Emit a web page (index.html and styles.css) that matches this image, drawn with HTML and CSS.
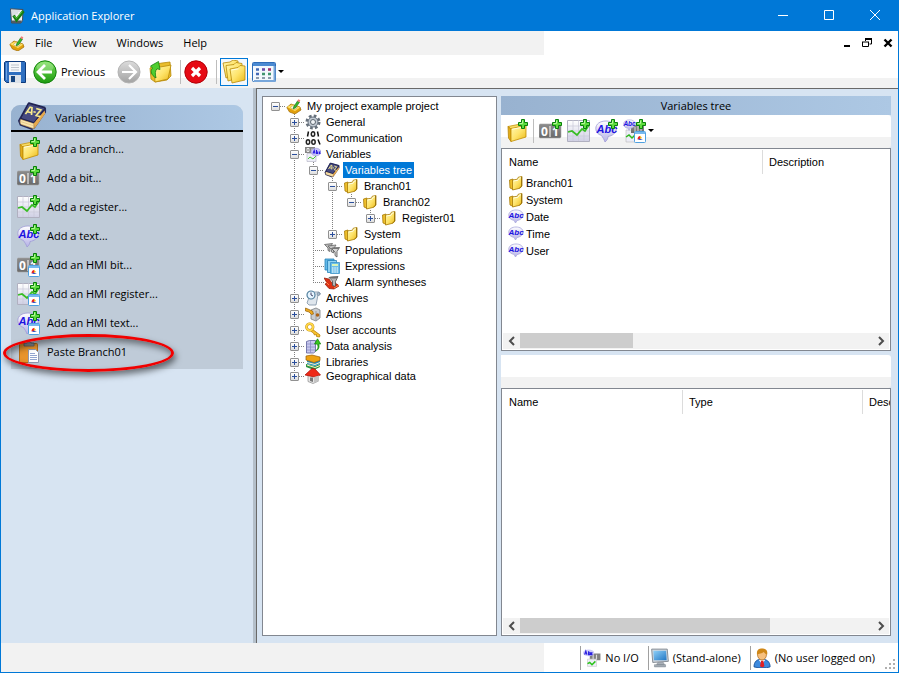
FILE: index.html
```html
<!DOCTYPE html>
<html lang="en">
<head>
<meta charset="utf-8">
<title>Application Explorer</title>
<link rel="stylesheet" href="styles.css">
</head>
<body>
<svg class="sprite" aria-hidden="true">
  <defs>
    <linearGradient id="gold" x1="0" y1="0" x2="1" y2="1"><stop offset="0" stop-color="#fff8b4"/><stop offset=".5" stop-color="#fee46c"/><stop offset="1" stop-color="#eab714"/></linearGradient>
    <linearGradient id="grass" x1="0" y1="0" x2="0" y2="1"><stop offset="0" stop-color="#7be05a"/><stop offset="1" stop-color="#1c9a10"/></linearGradient>
    <linearGradient id="steel" x1="0" y1="0" x2="0" y2="1"><stop offset="0" stop-color="#8c8c8c"/><stop offset="1" stop-color="#6a6a6a"/></linearGradient>
    <linearGradient id="bubble" x1="0" y1="0" x2="0" y2="1"><stop offset="0" stop-color="#fff"/><stop offset="1" stop-color="#b4b0e6"/></linearGradient>
    <linearGradient id="paper" x1="0" y1="0" x2="0" y2="1"><stop offset="0" stop-color="#fff"/><stop offset="1" stop-color="#cfcfe4"/></linearGradient>
    <linearGradient id="silver" x1="0" y1="0" x2="0" y2="1"><stop offset="0" stop-color="#dcdcdc"/><stop offset="1" stop-color="#a2a2a2"/></linearGradient>
    <linearGradient id="sky" x1="0" y1="0" x2="1" y2="1"><stop offset="0" stop-color="#8fd0f8"/><stop offset="1" stop-color="#2277c4"/></linearGradient>
  </defs>
  <symbol id="plus" viewBox="0 0 10 10"><path d="M3.500.5h3v3h3v3h-3v3h-3v-3h-3v-3h3z" fill="#5fdc3e" stroke="#08800a"/><path d="M4.500 1.500v3h-3" fill="none" stroke="#b5f79b"/></symbol>
  <symbol id="folder" viewBox="0 0 20 20"><path d="M1 4.500L11 2.500l8 1-14 5z" fill="#f8dd66" stroke="#c8950c" stroke-width=".8"/><path d="M1 4.500L4 7v12.500L1.500 16z" fill="#e2ac1a" stroke="#b98505" stroke-width=".8"/><path d="M4 6.500l15-3V15L4 19.500z" fill="url(#gold)" stroke="#c08c00" stroke-width=".8"/><path d="M5 7.300l13-2.600" stroke="#fffde0"/></symbol>
  <symbol id="folder-s" viewBox="0 0 16 16"><path d="M1.500 5L5 4l.500 10.500-3.500-1.500z" fill="#eebf2a" stroke="#a87b08" stroke-width=".8"/><path d="M4.500 5l5-.800.800-2L14 1.500V11l-2 2.200-7.500 1.800z" fill="url(#gold)" stroke="#a87b08" stroke-width=".8"/><path d="M13.500 2v9l-1.800 2" stroke="#8f6800" stroke-width=".8" fill="none"/><path d="M5.500 6l4.500-.800 1-2 2-.500" stroke="#fffde0" fill="none"/></symbol>
  <symbol id="bit" viewBox="0 0 24 24"><rect x="0" y="5" width="22" height="14" rx="1.500" fill="url(#steel)" stroke="#a5a5a5" stroke-width=".6"/><text x="2" y="16.500" class="glyph-bit">0</text><path d="M11 7v11" stroke="#fff"/><text x="13" y="16.500" class="glyph-bit">1</text></symbol>
  <symbol id="chart" viewBox="0 0 24 24"><path d="M.5 1.500h22v21H.5z" fill="url(#paper)" stroke="#b0b0c0"/><path d="M6 1v21M11.500 1v21M17 1v21M1 7h21M1 12h21M1 17h21" stroke="#c9c9d8" stroke-width=".7"/><path d="M1 13l4-1 5 4 5-6 3 2 4-6" fill="none" stroke="#38bd24" stroke-width="1.700"/></symbol>
  <symbol id="text" viewBox="0 0 24 24"><path d="M11 2c6 0 10.500 3 10.500 7.500S17 17 13 17.500c0 2-1 4-3 5.500-1-3-2-4-3.500-6.500C3 15.500.8 13 .8 9.500.8 5 5 2 11 2z" fill="url(#bubble)" stroke="#9e9ad6" stroke-width=".8"/><text x="1.500" y="13.500" class="glyph-abc">Abc</text></symbol>
  <symbol id="text-s" viewBox="0 0 16 16"><path d="M8 1c4 0 7 1.800 7 5S12 11 9 11.500L7.500 14 6 11.300C3 11 .8 9.300.8 6 .8 3 4 1 8 1z" fill="url(#bubble)" stroke="#aaa8dd" stroke-width=".8"/><text x=".5" y="9" class="glyph-abc-s">Abc</text></symbol>
  <symbol id="hmi" viewBox="0 0 12 12"><rect x=".5" y=".5" width="11" height="11" rx="1" fill="#fff" stroke="#4ea0e0"/><path d="M1 1h10v2H1z" fill="#78b9ee"/><path d="M3.500 8.500c0-2 1-3.500 2.500-3.500v3z" fill="#e22"/><path d="M6 4.500l2 2.500-2 1z" fill="#f6b21c"/><path d="M5.500 7.500L9 9H4z" fill="#3b55c8"/></symbol>
  <symbol id="add-branch" viewBox="0 0 24 24"><use href="#folder" x="2" y="3" width="20" height="20"/><use href="#plus" x="13" y="0" width="10" height="10"/></symbol>
  <symbol id="add-bit" viewBox="0 0 24 24"><use href="#bit" width="24" height="24"/><use href="#plus" x="13" y="0" width="10" height="10"/></symbol>
  <symbol id="add-register" viewBox="0 0 24 24"><use href="#chart" width="24" height="24"/><use href="#plus" x="13" y="0" width="10" height="10"/></symbol>
  <symbol id="add-text" viewBox="0 0 24 24"><use href="#text" width="24" height="24"/><use href="#plus" x="13" y="0" width="10" height="10"/></symbol>
  <symbol id="add-hmi-bit" viewBox="0 0 24 24"><use href="#add-bit" width="24" height="24"/><use href="#hmi" x="11" y="12" width="12" height="12"/></symbol>
  <symbol id="add-hmi-register" viewBox="0 0 24 24"><use href="#add-register" width="24" height="24"/><use href="#hmi" x="11" y="12" width="12" height="12"/></symbol>
  <symbol id="add-hmi-text" viewBox="0 0 24 24"><use href="#add-text" width="24" height="24"/><use href="#hmi" x="11" y="12" width="12" height="12"/></symbol>
  <symbol id="mix" viewBox="0 0 24 24"><path d="M3 11h12v12H3z" fill="#ececf6" stroke="#bbb" stroke-width=".6"/><path d="M3 18l3-2 3 3 4-4" stroke="#2eb81c" stroke-width="1.500" fill="none"/><rect x="8" y="6" width="13" height="8" fill="url(#steel)"/><path d="M12 8v5M15 7v6M18 8v5" stroke="#ddd"/><use href="#text-s" x="0" y="0" width="13" height="13"/><use href="#plus" x="13" y="0" width="10" height="10"/><use href="#hmi" x="11" y="12" width="12" height="12"/></symbol>
  <symbol id="paste" viewBox="0 0 24 24"><rect x="2.500" y="3.500" width="18" height="19" rx="1" fill="#e8942c" stroke="#b96c12"/><path d="M7 6V3h3c0-2 4-2 4 0h3v3z" fill="#8d9299" stroke="#5c6066" stroke-width=".8"/><path d="M11.500 9.500h7l3 3v10h-10z" fill="#fff" stroke="#8f98b0"/><path d="M13 13.500h5M13 15.500h7M13 17.500h7M13 19.500h7" stroke="#93a5cf"/></symbol>
  <symbol id="book" viewBox="0 0 32 32"><path d="M1 21L11 3c.5-1.500 1.500-2 3-1.500L30 6l1 2v4L19 29l-3 2L3 26z" fill="#262a5c"/><path d="M4 19.500l14 4.500v5.500L4.500 25C3 24 3 21 4 19.500z" fill="#fbe6b0" stroke="#b5893c" stroke-width=".6"/><path d="M4 22l14 4.500" stroke="#d9b671" stroke-width=".6"/><path d="M18 23.500L29.500 10l.5 3.500L18.500 29.500z" fill="#e6a94c"/><path d="M4 18.500L12.500 2.500 30 7.500 18 23z" fill="#464a80" stroke="#1c1f4b"/><path d="M9 14l5-7.500 2 .5-.5 8M11 11.500l4.500 1M17.500 11.500l2.500.5M20.500 8l5 1.500-5 6 4.500 1.200" fill="none" stroke="#f8eb8c" stroke-width="1.800"/></symbol>
  <symbol id="app" viewBox="0 0 16 16"><path d="M1.500.8l12.500.7-.5 11L12 15H2.500z" fill="#eef1f4" stroke="#454d57"/><path d="M2.500 12.500h10.500l-1 2.500H3z" fill="#525a62"/><path d="M3 3h8M3 5h6M3 7h4" stroke="#c7cdd4"/><path d="M4.500 7.500l3 4.500 7-9" fill="none" stroke="#167d14" stroke-width="3"/><path d="M5.500 8l2 2.500 5.500-7" fill="none" stroke="#59c63a"/></symbol>
  <symbol id="project" viewBox="0 0 16 16"><path d="M.8 9.500L5 6l9 3 1 3-6 4-5.500-2z" fill="#e2a00c" stroke="#9d6a05" stroke-width=".7"/><path d="M1 9l5-2.500 8 3-5 3.500z" fill="#ffe468"/><ellipse cx="8" cy="9.500" rx="3.200" ry="1.900" fill="#fff" stroke="#c69218" stroke-width=".6"/><path d="M7.500 9l4-6 2 1.200-4 5.800-2.500.8z" fill="#35b52a" stroke="#176f13" stroke-width=".6"/><path d="M11.300 3l1-1.800 2 1-.8 2z" fill="#f27b78"/></symbol>
  <symbol id="save" viewBox="0 0 24 24"><path d="M2.500 1.500h19l1 1v20h-19l-2-2v-18z" fill="#2f6fc0" stroke="#0d3a7c"/><path d="M6 2h12v10H6z" fill="#f5f7fa"/><path d="M8 5h8M8 7.500h8M8 10h8" stroke="#bcc3cc"/><path d="M6 15h12v8H6z" fill="#dce2ea"/><path d="M8 16h4v6H8z" fill="#17457f"/><path d="M3.500 3v17" stroke="#6da4e4"/></symbol>
  <symbol id="back" viewBox="0 0 24 24"><circle cx="12" cy="12" r="11.200" fill="url(#grass)" stroke="#12820d"/><ellipse cx="12" cy="7" rx="8.500" ry="5" fill="#fff" opacity=".22"/><path d="M12 5l-7 7 7 7M5.500 12H19" fill="none" stroke="#fff" stroke-width="2.800"/></symbol>
  <symbol id="forward" viewBox="0 0 24 24"><circle cx="12" cy="12" r="11" fill="url(#silver)" stroke="#b4b4b4"/><path d="M12 5l7 7-7 7M18.500 12H5" fill="none" stroke="#fff" stroke-width="2.200"/></symbol>
  <symbol id="folder-up" viewBox="0 0 24 24"><path d="M2 8l6-4 6-1 8-1 1 14-4 4-12 2-4-3z" fill="#e9bd2c" stroke="#b88908" stroke-width=".8"/><path d="M6 8l12-2 5-1-3 14L7 22z" fill="url(#gold)" stroke="#b88908" stroke-width=".8"/><path d="M8 18c-5-3-6-7-3.500-10L2.500 6l8-4.500 1.500 8L9 8.800c-2 2-2 5-1 9.200z" fill="#4fce2f" stroke="#14810e" stroke-width=".8"/></symbol>
  <symbol id="stop" viewBox="0 0 24 24"><circle cx="12" cy="12" r="11.200" fill="#e60a14" stroke="#b00008"/><path d="M8 8l8 8M16 8l-8 8" stroke="#fff" stroke-width="3.200"/></symbol>
  <symbol id="folders" viewBox="0 0 24 24"><path d="M1 3l7-1 3-2 5 1v13L4 18z" fill="url(#gold)" stroke="#b88908" stroke-width=".8"/><path d="M4 5.500l8-1L14 2.500l6 1V17L6 21z" fill="url(#gold)" stroke="#b88908" stroke-width=".8"/><path d="M8 9l8-1.500 2-2 5 .5v14L10 23z" fill="url(#gold)" stroke="#b88908" stroke-width=".8"/><path d="M9.500 10l7-1.200" stroke="#fffde0"/></symbol>
  <symbol id="views" viewBox="0 0 24 24"><rect x=".5" y="2.500" width="23" height="19" rx="1" fill="#f3f8fd" stroke="#2e6cb8"/><path d="M1 3h22v3H1z" fill="#4b8ad2"/><path d="M22.500 6v15H2" fill="none" stroke="#77a6da" stroke-width="2"/><path d="M4 9.500h3M4 14h3" stroke="#4368b5" stroke-width="2.600"/><path d="M10 9.500h3" stroke="#6a4ba8" stroke-width="2.600"/><path d="M16 9.500h3" stroke="#a02f6c" stroke-width="2.600"/><path d="M10 14h3M16 14h3" stroke="#3f9470" stroke-width="2.600"/><path d="M4 18h3M10 18h3M16 18h3" stroke="#6a7b91" stroke-width="1.600"/></symbol>
  <symbol id="gear" viewBox="0 0 16 16"><circle cx="8" cy="8" r="6" fill="none" stroke="#66707b" stroke-width="3" stroke-dasharray="2.600 2.110"/><circle cx="8" cy="8" r="5" fill="#c2cad3" stroke="#67727f"/><circle cx="8" cy="8" r="2.500" fill="#f1f4f7" stroke="#5c6670"/></symbol>
  <symbol id="binary" viewBox="0 0 16 16"><path d="M3.500 1.500l-1 5M12.500 1.500l1 5M13 9.500l2 5" stroke="#111" stroke-width="1.500"/><ellipse cx="8" cy="4" rx="1.700" ry="2.300" fill="none" stroke="#222" stroke-width="1.500"/><ellipse cx="3" cy="12" rx="1.700" ry="2.300" fill="none" stroke="#222" stroke-width="1.500"/><ellipse cx="8.500" cy="12" rx="1.700" ry="2.300" fill="none" stroke="#222" stroke-width="1.500"/></symbol>
  <symbol id="variables" viewBox="0 0 16 16"><path d="M0 1h10v6H0z" fill="#858585"/><path d="M2 2.500h2v3H2zM7 2.500v3" stroke="#fff" stroke-width=".8" fill="none"/><path d="M2 7.500h9v8H2z" fill="#eeeef8" stroke="#b9b9c8" stroke-width=".7"/><path d="M3 13l2-2 3 2 3-3" fill="none" stroke="#4ac832"/><ellipse cx="11" cy="6" rx="5" ry="3.800" fill="#c8c5f6" stroke="#9a96dc" stroke-width=".6"/><path d="M8 7.500l1.200-3L10 7.500M11.500 4v3.500h1.200V6h-1M15.500 6h-1v1.500h1" fill="none" stroke="#2a1fe0" stroke-width="1.100"/></symbol>
  <symbol id="variables-r" viewBox="0 0 16 16"><path d="M6 4h9.500v6H6z" fill="#818181"/><path d="M9 5v4M12 5v4" stroke="#ddd"/><path d="M4 9h8v6.500H4z" fill="#eeeef8" stroke="#ccc" stroke-width=".6"/><path d="M4 13l2-1 2 2 3-3" fill="none" stroke="#2cc41a" stroke-width="1.300"/><ellipse cx="5" cy="3.500" rx="5" ry="3" fill="#ceccf8"/><path d="M1.500 5l1-3 1 3M5 2v3h1.500V3.500H5M8.500 3.500h-1V5h1" fill="none" stroke="#2a1fe0" stroke-width="1.100"/></symbol>
  <symbol id="funnels" viewBox="0 0 16 16"><path d="M.5 2.500l8-1-2.500 4v4l-2-1V6z" fill="#b7b7b7" stroke="#666" stroke-width=".8"/><path d="M4 4l8-1-2.500 4v4l-2-1V7.500z" fill="#c4c4c4" stroke="#666" stroke-width=".8"/><path d="M7.500 6.500l8-1-2.500 4v5.500l-2-1.500V10z" fill="#d6d6d6" stroke="#555" stroke-width=".8"/><ellipse cx="11.500" cy="6.200" rx="3.600" ry=".9" fill="#777"/></symbol>
  <symbol id="calc" viewBox="0 0 16 16"><path d="M1 1h9v11H1z" fill="#63b9e8" stroke="#2480b8" stroke-width=".8"/><path d="M3.500 2.500h9v12h-9z" fill="#92d2f2" stroke="#2480b8" stroke-width=".8"/><path d="M6.500 4.500h9v11h-9z" fill="#6cbde8" stroke="#3a92c6" stroke-width=".8"/><path d="M8 6h6v2H8z" fill="#d9f4b8"/><path d="M8 10h6M8 12h6M8 14h6" stroke="#fff" stroke-dasharray="1.500 .8"/></symbol>
  <symbol id="alarm" viewBox="0 0 16 16"><path d="M0 4l5 1 3 4 5 1 2 2-5 3-5-.500L1 10l2-1z" fill="#dc3215" stroke="#8c1705" stroke-width=".7"/><path d="M5 3.500l9-1-2.500 5v5l-3-1V7z" fill="#b8b8b8" stroke="#4d4d4d" stroke-width=".8"/><ellipse cx="9.500" cy="3.500" rx="4" ry="1" fill="#6f6f6f"/><path d="M2 8l3 3M10 14l5-3" stroke="#ff8148"/></symbol>
  <symbol id="archive" viewBox="0 0 16 16"><path d="M6 2h8l1.500 2-2.500 1-2 10H4l-2-2z" fill="#dfe6ed" stroke="#7e90a3" stroke-width=".8"/><circle cx="6" cy="5" r="4" fill="#e7f5ff" stroke="#53809f" stroke-width="1.200"/><path d="M6 2.500V5l2 1" fill="none" stroke="#446"/><circle cx="13.500" cy="4" r="1.500" fill="#a7b8c9" stroke="#667d93" stroke-width=".6"/></symbol>
  <symbol id="action" viewBox="0 0 16 16"><path d="M6 4l5-2 4 2v8l-4 3-5-2z" fill="#c9ccd0" stroke="#7a7e82" stroke-width=".8"/><path d="M11 5v9" stroke="#9a9da1"/><circle cx="12.500" cy="9" r="1.800" fill="#ad6218"/><path d="M.5 2l7 3 1 3-2 .5L4 6 .5 5z" fill="#eda81f" stroke="#936008" stroke-width=".7"/></symbol>
  <symbol id="key" viewBox="0 0 16 16"><path d="M7 7l8 6-.500 2-3-.500v-2l-2 .500-1-2-3-2" fill="#f9c42c" stroke="#b47d06" stroke-width=".8"/><circle cx="4.800" cy="5" r="3.300" fill="none" stroke="#c08a10" stroke-width="2.600"/><circle cx="4.800" cy="5" r="3.300" fill="none" stroke="#ffd848" stroke-width="1.800"/></symbol>
  <symbol id="analysis" viewBox="0 0 16 16"><path d="M1.500 3.500l3-1h6v11l-2 1.500h-7z" fill="#c8c9ef" stroke="#5c5e9b" stroke-width=".8"/><path d="M2 6h8M2 9h8M2 12h8M5.500 3v12" stroke="#8c8dc4" stroke-width=".8"/><path d="M10.500 13c3-2 3-5 1.500-7H9.500L12.500.8l3.200 5.200h-2c1 3 0 6-3.200 7z" fill="#36c61e" stroke="#0e7f08" stroke-width=".7"/></symbol>
  <symbol id="library" viewBox="0 0 16 16"><path d="M1 10l9 2 5-2v3l-6 3-8-3z" fill="#2f9442"/><path d="M2 6l7 2 6-2v4l-5 2-8-2z" fill="#248ec0"/><path d="M1 2l6-1 8 2v3.500L9 8.500 1 6z" fill="#eea211" stroke="#985d04" stroke-width=".7"/><path d="M2 8.500l8 2 5-2M2 11l8 2.500 5-2" fill="none" stroke="#fff5c4"/></symbol>
  <symbol id="house" viewBox="0 0 16 16"><path d="M3 7h10.500v6L8 15.500 3 13.500z" fill="#e6e6e6" stroke="#8a8a8a" stroke-width=".7"/><path d="M0 7l7-6.500 3 .500L15.500 7l-6 2z" fill="#ee2a18" stroke="#a40e05" stroke-width=".7"/><path d="M5 9.500h3V14l-3-1z" fill="#777"/><path d="M9 9v6l5-2V7.500z" fill="#c4c4c4"/></symbol>
  <symbol id="monitor" viewBox="0 0 16 18"><path d="M.5 1h14l1 11-14 1z" fill="#d3d8de" stroke="#7b838c" stroke-width=".8"/><path d="M2 2.500h11.500l.5 8.500H2.500z" fill="url(#sky)"/><path d="M6 13h5l1 2H5zM3 15h10v2H3z" fill="#a9b0b8" stroke="#7f8790" stroke-width=".5"/></symbol>
  <symbol id="user" viewBox="0 0 16 18"><path d="M.8 17c0-5 3-7 7-7s7.500 2 7.500 7c-4 1.300-10 1.300-14.500 0z" fill="#3d8ade" stroke="#19519a" stroke-width=".8"/><path d="M5 10.500l3 4 3-4z" fill="#fff"/><path d="M7.200 11.500h2l1 5-2 1-2-1z" fill="#e22022"/><ellipse cx="8" cy="6" rx="4" ry="4.800" fill="#f7c07e" stroke="#b06e1e" stroke-width=".7"/><path d="M3.500 6C3 2 5 .5 8 .5s5.500 1.500 4.600 5.500C11 5 10 4 9.500 3.500 8 5 5 4.500 3.500 6z" fill="#cf8718"/></symbol>
</svg>

<div class="window">
  <header class="titlebar">
    <svg class="i16"><use href="#app"/></svg>
    <h1>Application Explorer</h1>
    <div class="caption-buttons">
      <button aria-label="Minimize"><svg class="i12" viewBox="0 0 12 12"><path d="M1 5.500h10" stroke="#fff"/></svg></button>
      <button aria-label="Maximize"><svg class="i12" viewBox="0 0 12 12"><path d="M1.500.5h9v9h-9z" fill="none" stroke="#fff"/></svg></button>
      <button aria-label="Close"><svg class="i12" viewBox="0 0 12 12"><path d="M1 0l10 10M11 0L1 10" stroke="#fff"/></svg></button>
    </div>
  </header>

  <nav class="menubar">
    <svg class="i16"><use href="#project"/></svg>
    <button>File</button><button>View</button><button>Windows</button><button>Help</button>
    <div class="mdi-buttons">
      <button aria-label="Minimize document"><svg class="i12" viewBox="0 0 12 12"><path d="M2 9h6" stroke="#000" stroke-width="2"/></svg></button>
      <button aria-label="Restore document"><svg class="i12" viewBox="0 0 12 12"><path d="M3 1.500h7M3 2.500h7M9.500 2v5H7.500M3.500 2v2M.5 5v4.500h6V5M0 5h7" fill="none" stroke="#000"/></svg></button>
      <button aria-label="Close document"><svg class="i12" viewBox="0 0 12 12"><path d="M2.500 2.500l7 7M9.500 2.500l-7 7" stroke="#000" stroke-width="2.400"/></svg></button>
    </div>
  </nav>

  <div class="toolbar">
    <button aria-label="Save"><svg class="i24"><use href="#save"/></svg></button>
    <button class="previous"><svg class="i24"><use href="#back"/></svg>Previous</button>
    <button aria-label="Next"><svg class="i24"><use href="#forward"/></svg></button>
    <button class="up" aria-label="Up one level"><svg class="i24"><use href="#folder-up"/></svg></button>
    <span class="separator"></span>
    <button aria-label="Delete"><svg class="i24"><use href="#stop"/></svg></button>
    <span class="separator"></span>
    <button class="checked" aria-label="Show tree" aria-pressed="true"><svg class="i24"><use href="#folders"/></svg></button>
    <button class="views" aria-label="Views"><svg class="i24"><use href="#views"/></svg><span class="caret"></span></button>
  </div>

  <main class="workspace">
    <aside class="tasks">
      <section class="task-panel">
        <h2><svg class="i32"><use href="#book"/></svg>Variables tree</h2>
        <ul>
          <li><button><svg class="i24"><use href="#add-branch"/></svg>Add a branch...</button></li>
          <li><button><svg class="i24"><use href="#add-bit"/></svg>Add a bit...</button></li>
          <li><button><svg class="i24"><use href="#add-register"/></svg>Add a register...</button></li>
          <li><button><svg class="i24"><use href="#add-text"/></svg>Add a text...</button></li>
          <li><button><svg class="i24"><use href="#add-hmi-bit"/></svg>Add an HMI bit...</button></li>
          <li><button><svg class="i24"><use href="#add-hmi-register"/></svg>Add an HMI register...</button></li>
          <li><button><svg class="i24"><use href="#add-hmi-text"/></svg>Add an HMI text...</button></li>
          <li class="marked"><button><svg class="i24"><use href="#paste"/></svg>Paste Branch01</button><span class="marker"></span></li>
        </ul>
      </section>
    </aside>

    <div class="explorer">
      <nav class="tree">
        <ul>
          <li><div class="node"><button class="toggle open" aria-label="Collapse"></button><svg class="i16"><use href="#project"/></svg><span>My project example project</span></div>
            <ul>
              <li><div class="node"><button class="toggle" aria-label="Expand"></button><svg class="i16"><use href="#gear"/></svg><span>General</span></div></li>
              <li><div class="node"><button class="toggle" aria-label="Expand"></button><svg class="i16"><use href="#binary"/></svg><span>Communication</span></div></li>
              <li><div class="node"><button class="toggle open" aria-label="Collapse"></button><svg class="i16"><use href="#variables"/></svg><span>Variables</span></div>
                <ul>
                  <li><div class="node"><button class="toggle open" aria-label="Collapse"></button><svg class="i16"><use href="#book"/></svg><span class="selected">Variables tree</span></div>
                    <ul>
                      <li><div class="node"><button class="toggle open" aria-label="Collapse"></button><svg class="i16"><use href="#folder-s"/></svg><span>Branch01</span></div>
                        <ul>
                          <li><div class="node"><button class="toggle open" aria-label="Collapse"></button><svg class="i16"><use href="#folder-s"/></svg><span>Branch02</span></div>
                            <ul>
                              <li><div class="node"><button class="toggle" aria-label="Expand"></button><svg class="i16"><use href="#folder-s"/></svg><span>Register01</span></div></li>
                            </ul>
                          </li>
                        </ul>
                      </li>
                      <li><div class="node"><button class="toggle" aria-label="Expand"></button><svg class="i16"><use href="#folder-s"/></svg><span>System</span></div></li>
                    </ul>
                  </li>
                  <li><div class="node leaf"><svg class="i16"><use href="#funnels"/></svg><span>Populations</span></div></li>
                  <li><div class="node leaf"><svg class="i16"><use href="#calc"/></svg><span>Expressions</span></div></li>
                  <li><div class="node leaf"><svg class="i16"><use href="#alarm"/></svg><span>Alarm syntheses</span></div></li>
                </ul>
              </li>
              <li><div class="node"><button class="toggle" aria-label="Expand"></button><svg class="i16"><use href="#archive"/></svg><span>Archives</span></div></li>
              <li><div class="node"><button class="toggle" aria-label="Expand"></button><svg class="i16"><use href="#action"/></svg><span>Actions</span></div></li>
              <li><div class="node"><button class="toggle" aria-label="Expand"></button><svg class="i16"><use href="#key"/></svg><span>User accounts</span></div></li>
              <li><div class="node"><button class="toggle" aria-label="Expand"></button><svg class="i16"><use href="#analysis"/></svg><span>Data analysis</span></div></li>
              <li><div class="node"><button class="toggle" aria-label="Expand"></button><svg class="i16"><use href="#library"/></svg><span>Libraries</span></div></li>
              <li><div class="node short"><button class="toggle" aria-label="Expand"></button><svg class="i16"><use href="#house"/></svg><span>Geographical data</span></div></li>
            </ul>
          </li>
        </ul>
      </nav>

      <div class="details">
        <h2>Variables tree</h2>
        <div class="panel-bar">
          <button aria-label="Add a branch"><svg class="i24"><use href="#add-branch"/></svg></button>
          <span class="separator"></span>
          <button aria-label="Add a bit"><svg class="i24"><use href="#add-bit"/></svg></button>
          <button aria-label="Add a register"><svg class="i24"><use href="#add-register"/></svg></button>
          <button aria-label="Add a text"><svg class="i24"><use href="#add-text"/></svg></button>
          <button class="more" aria-label="Add HMI variable"><svg class="i24"><use href="#mix"/></svg><span class="caret"></span></button>
        </div>
        <section class="list upper">
          <div class="list-body">
            <table>
              <colgroup><col class="wide"><col></colgroup>
              <thead><tr><th>Name</th><th>Description</th></tr></thead>
              <tbody>
                <tr><td><div class="cell"><svg class="i16"><use href="#folder-s"/></svg>Branch01</div></td><td></td></tr>
                <tr><td><div class="cell"><svg class="i16"><use href="#folder-s"/></svg>System</div></td><td></td></tr>
                <tr><td><div class="cell"><svg class="i16"><use href="#text-s"/></svg>Date</div></td><td></td></tr>
                <tr><td><div class="cell"><svg class="i16"><use href="#text-s"/></svg>Time</div></td><td></td></tr>
                <tr><td><div class="cell"><svg class="i16"><use href="#text-s"/></svg>User</div></td><td></td></tr>
              </tbody>
            </table>
          </div>
          <div class="scrollbar">
            <button aria-label="Scroll left"><svg viewBox="0 0 8 10"><path d="M6 1L2 5l4 4" /></svg></button>
            <div class="track"><div class="thumb third"></div></div>
            <button aria-label="Scroll right"><svg viewBox="0 0 8 10"><path d="M2 1l4 4-4 4" /></svg></button>
          </div>
        </section>
        <div class="panel-bar second"></div>
        <section class="list lower">
          <div class="list-body">
            <table>
              <colgroup><col class="first"><col class="mid"><col class="mid"></colgroup>
              <thead><tr><th>Name</th><th>Type</th><th>Description</th></tr></thead>
            </table>
          </div>
          <div class="scrollbar">
            <button aria-label="Scroll left"><svg viewBox="0 0 8 10"><path d="M6 1L2 5l4 4" /></svg></button>
            <div class="track"><div class="thumb most"></div></div>
            <button aria-label="Scroll right"><svg viewBox="0 0 8 10"><path d="M2 1l4 4-4 4" /></svg></button>
          </div>
        </section>
      </div>
    </div>
  </main>

  <footer class="statusbar">
    <div class="status"><svg class="i18"><use href="#variables-r"/></svg>No I/O</div>
    <div class="status"><svg class="i18"><use href="#monitor"/></svg>(Stand-alone)</div>
    <div class="status"><svg class="i18"><use href="#user"/></svg>(No user logged on)</div>
    <svg class="grip" viewBox="0 0 12 12"><path d="M9 1h2v2H9zM5 5h2v2H5zM9 5h2v2H9zM1 9h2v2H1zM5 9h2v2H5zM9 9h2v2H9z" fill="#b0b0b0"/></svg>
  </footer>
</div>
</body>
</html>
```

FILE: styles.css
```css
:root {
  --blue: #0078d7;
  --pane: #d7e4f2;
  --face: #f2f2f2;
  --edge: #828790;
  --ui: "Open Sans", "Noto Sans", sans-serif;
  --classic: "Liberation Sans", sans-serif;
}

* { box-sizing: border-box; }

body {
  margin: 0;
  color: #000;
  font: 11px/16px var(--ui);
}

h1, h2 { margin: 0; font-size: inherit; font-weight: 400; }
ul { margin: 0; padding: 0; list-style: none; }

button {
  display: flex;
  align-items: center;
  justify-content: center;
  margin: 0;
  padding: 0;
  border: 0;
  background: none;
  color: inherit;
  font: inherit;
  white-space: nowrap;
}

svg { flex: none; display: block; }
.sprite { position: absolute; width: 0; height: 0; }
.i12 { width: 12px; height: 12px; }
.i16 { width: 16px; height: 16px; }
.i18 { width: 18px; height: 20px; }
.i24 { width: 24px; height: 24px; }
.i32 { width: 32px; height: 30px; }

.glyph-bit { font: 700 12px var(--ui); fill: #fff; }
.glyph-abc { font: italic 700 11px var(--classic); fill: #1c12e0; }
.glyph-abc-s { font: italic 700 8px var(--classic); fill: #1c12e0; }

.window {
  display: flex;
  flex-direction: column;
  min-height: 100vh;
  border: 1px solid var(--blue);
  background: #fff;
}

/* Title and menu */
.titlebar {
  display: flex;
  align-items: center;
  height: 30px;
  padding-left: 8px;
  gap: 6px;
  background: var(--blue);
  color: #fff;
}
.caption-buttons { display: flex; margin-left: auto; }
.caption-buttons button { width: 46px; height: 30px; }

.menubar {
  display: flex;
  align-items: center;
  height: 24px;
  padding: 0 4px 0 8px;
  background: linear-gradient(90deg, var(--face) 543px, #fff 543px);
}
.menubar > button { padding: 0 10px; }
.mdi-buttons { display: flex; gap: 8px; margin-left: auto; }

/* Main toolbar */
.toolbar {
  display: flex;
  align-items: center;
  height: 33px;
  padding-left: 2px;
  background: linear-gradient(#fff 23px, var(--face) 23px);
}
.previous { gap: 4px; margin: 0 12px 0 6px; }
.up { margin-left: 7px; }
.separator { width: 1px; height: 24px; margin: 0 3px 0 8px; background: #bdbdbd; }
.checked {
  width: 28px;
  height: 28px;
  margin-right: 4px;
  border: 1px solid var(--blue);
  background: #f3f8fd;
}
.views { gap: 2px; }
.caret {
  border: 3px solid transparent;
  border-top-color: #000;
  border-bottom-width: 0;
}

/* Workspace */
.workspace { display: flex; flex: 1; }
.tasks {
  flex: 0 0 256px;
  padding: 17px 13px 0 10px;
  border-right: 1px solid #696969;
  background: linear-gradient(90deg, var(--pane) 252px, #b4bfca 252px);
}
.task-panel { background: #bfcbd8; border-radius: 9px 9px 0 0; }
.task-panel h2 {
  display: flex;
  align-items: center;
  height: 27px;
  padding-left: 5px;
  gap: 7px;
  border-bottom: 2px solid #000;
  border-radius: 9px 9px 0 0;
  background: linear-gradient(90deg, #98b2d0, #adc8e4);
}
.task-panel .i32 { margin-top: -4px; }
.task-panel ul { padding: 2px 0 3px 6px; }
.task-panel li button { height: 29px; gap: 6px; }
.marked { position: relative; }
.marker {
  position: absolute;
  left: -14px;
  top: -3px;
  width: 171px;
  height: 38px;
  border: 3px solid #f00000;
  border-radius: 50%;
  box-shadow: 2px 4px 6px rgba(0, 0, 0, .5), inset 2px 4px 6px rgba(0, 0, 0, .45);
}

.explorer {
  display: flex;
  flex: 1;
  min-width: 0;
  gap: 4px;
  padding: 7px 7px 7px 5px;
  border-top: 1px solid #696969;
  background: var(--pane);
}

/* Project tree */
.tree {
  flex: 0 0 235px;
  padding: 1px 0 0 8px;
  border: 1px solid var(--edge);
  background: #fff;
  font: 11px/16px var(--classic);
}
.tree ul ul { padding-left: 19px; }
.tree li { position: relative; }
.tree ul ul > li::before {
  content: "";
  position: absolute;
  left: 4px;
  top: 0;
  bottom: 0;
  width: 1px;
  background: repeating-linear-gradient(#808080 0 1px, transparent 1px 2px);
}
.tree ul ul > li:last-child::before { bottom: auto; height: 8px; }
.node { position: relative; display: flex; align-items: center; height: 16px; white-space: nowrap; }
.node.short { height: 12px; }
.node::before {
  content: "";
  order: 1;
  width: 6px;
  height: 1px;
  background: repeating-linear-gradient(90deg, #808080 0 1px, transparent 1px 2px);
}
.node.leaf::before { width: 11px; margin-left: 4px; }
.node svg { order: 2; }
.node span { order: 3; margin-left: 3px; padding: 0 2px; }
.node .selected { background: var(--blue); color: #fff; }
.toggle {
  width: 9px;
  height: 9px;
  border: 1px solid #919191;
  border-radius: 1px;
  background:
    linear-gradient(#2b4f9c, #2b4f9c) center / 5px 1px no-repeat,
    linear-gradient(#2b4f9c, #2b4f9c) center / 1px 5px no-repeat,
    linear-gradient(#fff, #dedede);
}
.toggle.open {
  background:
    linear-gradient(#2b4f9c, #2b4f9c) center / 5px 1px no-repeat,
    linear-gradient(#fff, #dedede);
}

/* Detail lists */
.details { display: flex; flex-direction: column; flex: 1; min-width: 0; }
.details h2 {
  height: 19px;
  line-height: 19px;
  text-align: center;
  background: linear-gradient(90deg, #98b2d0, #adc8e4);
}
.panel-bar {
  display: flex;
  align-items: center;
  height: 33px;
  padding: 0 0 2px 4px;
  gap: 4px;
  border-radius: 0 3px 3px 0;
  background: linear-gradient(#fff 22px, var(--face) 22px);
}
.panel-bar .separator { margin: 0 1px 0 0; }
.panel-bar .more { gap: 1px; }
.panel-bar.second { margin-top: 4px; }

.list {
  display: flex;
  flex-direction: column;
  border: 1px solid var(--edge);
  background: #fff;
  font: 11px/16px var(--classic);
}
.upper { height: 203px; }
.lower { flex: 1; }
.list-body { flex: 1; overflow: hidden; }
table { width: 100%; border-collapse: collapse; table-layout: fixed; }
.lower table { width: 541px; }
.wide { width: 261px; }
.first { width: 181px; }
.mid { width: 180px; }
th {
  height: 25px;
  padding: 0 6px;
  text-align: left;
  font-weight: 400;
  background: linear-gradient(#dcdcdc, #dcdcdc) right 1px / 1px 24px no-repeat;
}
th:first-child { padding-left: 7px; }
th:last-child { background: none; }
td { height: 17px; padding: 0 0 0 6px; }
.cell { display: flex; align-items: center; height: 17px; gap: 2px; }

.scrollbar { display: flex; height: 17px; padding: 0 1px 1px; }
.scrollbar button { width: 17px; background: var(--face); }
.scrollbar svg { width: 8px; height: 10px; fill: none; stroke: #4d4d4d; stroke-width: 2; }
.track { flex: 1; background: var(--face); }
.thumb { height: 15px; background: #cdcdcd; }
.third { width: 32%; }
.most { width: 71%; }

/* Status bar */
.statusbar {
  display: flex;
  justify-content: flex-end;
  align-items: center;
  height: 29px;
  padding-right: 2px;
  background: linear-gradient(90deg, var(--face) 543px, #fff 543px);
}
.status {
  display: flex;
  align-items: center;
  height: 24px;
  padding: 0 9px 0 2px;
  gap: 4px;
  border-left: 1px solid #a0a0a0;
  white-space: nowrap;
}
.grip { align-self: flex-end; width: 12px; height: 12px; margin-bottom: 2px; }
```
